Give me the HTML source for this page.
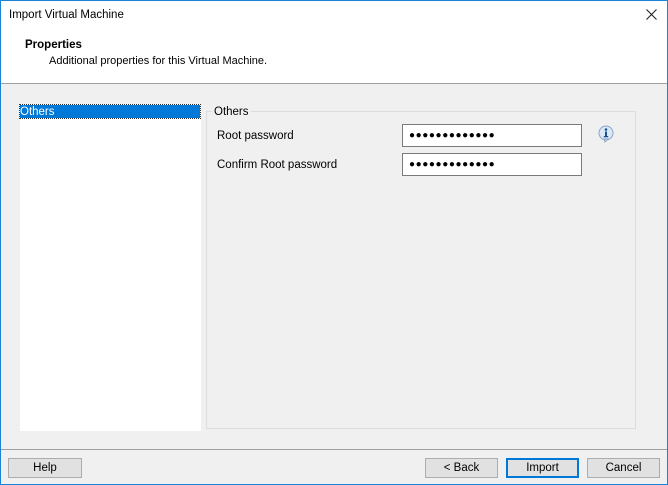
<!DOCTYPE html>
<html><head><style>
*{margin:0;padding:0;box-sizing:border-box}
body{width:668px;height:485px;position:relative;font-family:"Liberation Sans",sans-serif;font-size:11.5px;color:#000;background:#f0f0f0;overflow:hidden}
.abs{position:absolute}
.btn{position:absolute;top:458px;height:20px;background:#e1e1e1;border:1px solid #adadad;text-align:center;line-height:19px;font-size:11.5px}
.pw{position:absolute;left:402px;width:180px;height:23px;background:#fff;border:1px solid #7a7a7a;font-size:10px;letter-spacing:0.6px;padding-left:6px;line-height:21px}
</style></head><body>
<div class="abs" style="left:0;top:0;width:668px;height:83px;background:#fff"></div>
<div class="abs" style="left:9px;top:9px">Import Virtual Machine</div>
<svg class="abs" style="left:646px;top:9px" width="11" height="11"><path d="M0.5 0.5L10.5 10.5M10.5 0.5L0.5 10.5" stroke="#222" stroke-width="1.1"/></svg>
<div class="abs" style="left:25px;top:39px;font-weight:bold">Properties</div>
<div class="abs" style="left:49px;top:55px;font-size:11px">Additional properties for this Virtual Machine.</div>
<div class="abs" style="left:0;top:83px;width:668px;height:1px;background:#a0a0a0"></div>
<div class="abs" style="left:20px;top:104px;width:181px;height:327px;background:#fff"></div>
<div class="abs" style="left:20px;top:105px;width:180px;height:13px;background:#0078d7;color:#fff;line-height:14px;outline:1px dotted #333">Others</div>
<div class="abs" style="left:206px;top:111px;width:430px;height:318px;border:1px solid #dcdcdc"></div>
<div class="abs" style="left:212px;top:106px;background:#f0f0f0;padding:0 2px">Others</div>
<div class="abs" style="left:217px;top:130px">Root password</div>
<div class="abs" style="left:217px;top:159px">Confirm Root password</div>
<div class="pw" style="top:124px">●●●●●●●●●●●●●</div>
<div class="pw" style="top:153px">●●●●●●●●●●●●●</div>
<svg class="abs" style="left:597px;top:125px" width="18" height="18" viewBox="0 0 18 18"><circle cx="9" cy="8" r="7" fill="#dbe8f5" stroke="#8aa6c4"/><path d="M7 14 L8 17 L11 14Z" fill="#dbe8f5" stroke="#8aa6c4"/><circle cx="9" cy="4.5" r="1.3" fill="#1c4f8c"/><rect x="8" y="6.5" width="2" height="5.5" fill="#1c4f8c"/><rect x="6.8" y="11" width="4.4" height="1.3" fill="#1c4f8c"/></svg>
<div class="abs" style="left:0;top:449px;width:668px;height:1px;background:#a0a0a0"></div>
<div class="btn" style="left:8px;width:74px">Help</div>
<div class="btn" style="left:425px;width:73px">&lt; Back</div>
<div class="btn" style="left:506px;width:73px;border:2px solid #0078d7;line-height:17px">Import</div>
<div class="btn" style="left:587px;width:73px">Cancel</div>
<div class="abs" style="left:0;top:0;width:668px;height:485px;border:1px solid #1883d7"></div>
</body></html>
